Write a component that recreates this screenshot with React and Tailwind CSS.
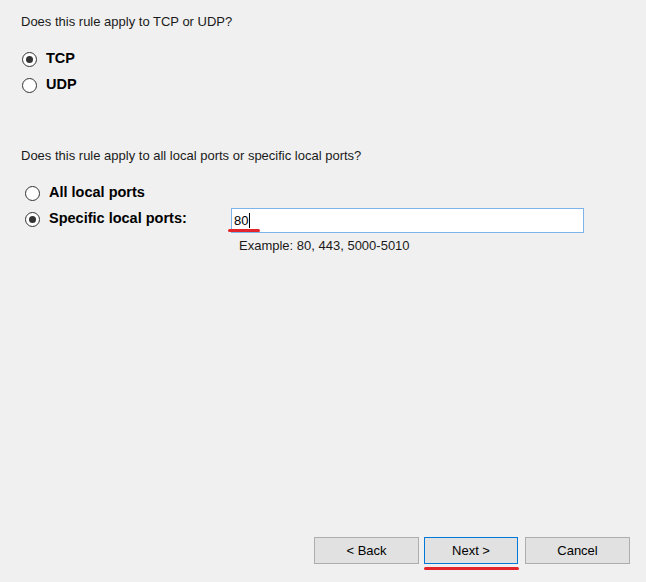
import React from 'react';

const Radio = ({ checked }) => (
    <span className="flex h-[15px] w-[15px] shrink-0 items-center justify-center rounded-full border border-[#333333] bg-white">
        {checked && <span className="h-[7px] w-[7px] rounded-full bg-[#333333]" />}
    </span>
);

const Option = ({ checked, label }) => (
    <div className="flex h-[26px] items-center gap-[9px]">
        <Radio checked={checked} />
        <span className="text-[14.5px] font-bold text-black">{label}</span>
    </div>
);

export default function App() {
    return (
        <div
            className="flex h-[582px] w-[646px] flex-col bg-[#f0f0f0] text-black"
            style={{ fontFamily: '"Liberation Sans", Arial, sans-serif' }}
        >
            {/* Protocol */}
            <div className="pl-[21px] pt-[14px]">
                <p className="text-[13px] leading-[16px] text-[#1a1a1a]">Does this rule apply to TCP or UDP?</p>
                <div className="mt-[16px] pl-[1px]">
                    <Option checked label="TCP" />
                    <Option label="UDP" />
                </div>
            </div>

            {/* Ports */}
            <div className="pl-[21px] pt-[50px]">
                <p className="text-[13px] leading-[16px] text-[#1a1a1a]">
                    Does this rule apply to all local ports or specific local ports?
                </p>
                <div className="mt-[16px] pl-[4px]">
                    <Option label="All local ports" />
                    <div className="flex items-start">
                        <div className="flex h-[26px] w-[206px] items-center gap-[9px]">
                            <Radio checked />
                            <span className="text-[14.5px] font-bold">Specific local ports:</span>
                        </div>
                        <div className="relative mt-[2px]">
                            <div className="flex h-[25px] w-[353px] items-center border border-[#7eb4ea] bg-white pl-[2px] text-[13px]">
                                80<span className="ml-[1px] h-[15px] w-[1px] bg-black" />
                            </div>
                            <span className="absolute left-[-3px] top-[21px] h-[3px] w-[32px] rounded-full bg-[#e3242b]" />
                        </div>
                    </div>
                    <p className="ml-[214px] mt-[3px] text-[13px] text-[#1a1a1a]">Example: 80, 443, 5000-5010</p>
                </div>
            </div>

            {/* Buttons */}
            <div className="mt-auto flex justify-end pb-[18px] pr-[16px]">
                <button className="h-[27px] w-[105px] border border-[#adadad] bg-[#e1e1e1] text-[13px]">&lt; Back</button>
                <div className="relative ml-[5px]">
                    <button className="h-[27px] w-[94px] border border-[#0078d7] bg-[#e1e1e1] text-[13px]">Next &gt;</button>
                    <span className="absolute left-0 top-[30px] h-[3px] w-[95px] rounded-full bg-[#e3242b]" />
                </div>
                <button className="ml-[7px] h-[27px] w-[105px] border border-[#adadad] bg-[#e1e1e1] text-[13px]">Cancel</button>
            </div>
        </div>
    );
}
